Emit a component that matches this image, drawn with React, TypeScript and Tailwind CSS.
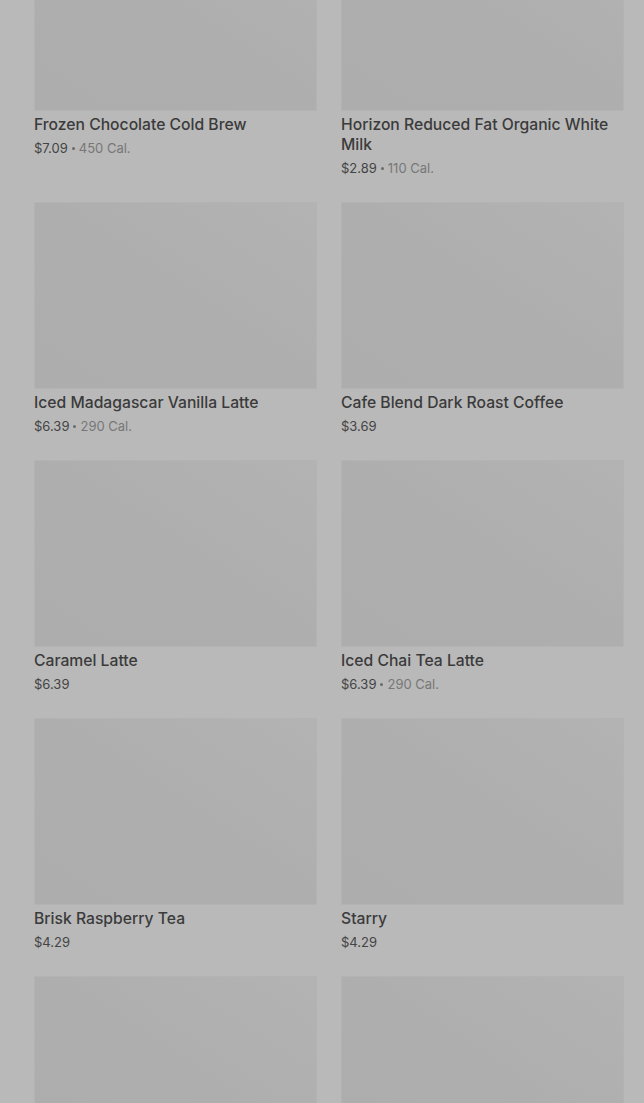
import type { ReactNode } from 'react'

interface Item {
  name: string
  price: string
  cal?: string
}

const ITEMS: Item[] = [
  { name: 'Frozen Chocolate Cold Brew', price: '$7.09', cal: '450 Cal.' },
  { name: 'Horizon Reduced Fat Organic White Milk', price: '$2.89', cal: '110 Cal.' },
  { name: 'Iced Madagascar Vanilla Latte', price: '$6.39', cal: '290 Cal.' },
  { name: 'Cafe Blend Dark Roast Coffee', price: '$3.69' },
  { name: 'Caramel Latte', price: '$6.39' },
  { name: 'Iced Chai Tea Latte', price: '$6.39', cal: '290 Cal.' },
  { name: 'Brisk Raspberry Tea', price: '$4.29' },
  { name: 'Starry', price: '$4.29' },
  { name: '', price: '' },
  { name: '', price: '' },
]

function Placeholder({ children }: { children?: ReactNode }) {
  // dimmed image slot, a shade darker than the overlay with a soft light corner
  return (
    <div className="h-[187px] w-full border border-[#b3b3b3] bg-gradient-to-tr from-[#adadad] via-[#aeaeae] to-[#b3b3b3]">
      {children}
    </div>
  )
}

function ItemCard({ item }: { item: Item }) {
  return (
    <div className="flex flex-col">
      <Placeholder />
      {item.name && (
        <>
          <p className="mt-[4px] text-[15.7px] font-medium leading-5 text-[#3b3b3b]">{item.name}</p>
          <div className="mt-[5px] flex h-4 items-center text-[13px] leading-4 text-[#444]">
            <span>{item.price}</span>
            {item.cal && (
              <>
                <span className="mx-[4px] h-[3px] w-[3px] rounded-full bg-[#6a6a6a]" />
                <span className="text-[#777]">{item.cal}</span>
              </>
            )}
          </div>
        </>
      )}
    </div>
  )
}

export default function App() {
  return (
    <div
      className="h-[1103px] overflow-hidden bg-[#b9b9b9]"
      style={{ fontFamily: 'Inter, "Noto Sans", sans-serif' }}
    >
      <div className="-mt-[76px] grid grid-cols-2 gap-x-6 gap-y-[26px] pl-[34px] pr-[20px]">
        {ITEMS.map((item, i) => (
          <ItemCard key={i} item={item} />
        ))}
      </div>
    </div>
  )
}
